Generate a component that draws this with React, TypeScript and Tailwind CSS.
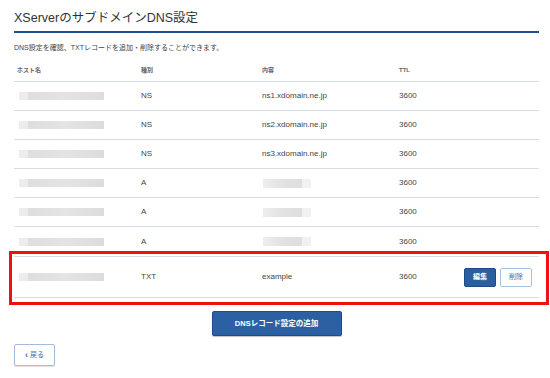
import React from "react";

type Rec = { type: string; content?: string; ttl: string; blurContent?: boolean };

const records: Rec[] = [
  { type: "NS", content: "ns1.xdomain.ne.jp", ttl: "3600" },
  { type: "NS", content: "ns2.xdomain.ne.jp", ttl: "3600" },
  { type: "NS", content: "ns3.xdomain.ne.jp", ttl: "3600" },
  { type: "A", blurContent: true, ttl: "3600" },
  { type: "A", blurContent: true, ttl: "3600" },
  { type: "A", blurContent: true, ttl: "3600" },
];

const font = { fontFamily: '"Liberation Sans", "Noto Sans CJK JP", sans-serif' };

// masked host name (blurred in the original)
const BlurHost = () => (
  <div className="ml-[2px] flex h-[8px] w-[85px]">
    <div className="w-[9px] bg-[#ececec]" />
    <div className="flex-1 bg-gradient-to-r from-[#dedede] via-[#e4e4e4] to-[#dcdcdc]" />
  </div>
);

const BlurContent = () => (
  <div className="ml-[1px] flex h-[9px] w-[48px]">
    <div className="w-[39px] bg-gradient-to-r from-[#ededed] via-[#e2e2e2] to-[#dedede]" />
    <div className="flex-1 bg-[#f1f1f1]" />
  </div>
);

export default function App() {
  return (
    <div className="h-[378px] w-[550px] bg-white text-[#444]" style={font}>
      <div className="pl-[14px] pr-[11px] pt-[10px]">
        <h1 className="border-b-2 border-[#1f4f93] pb-[4px] text-[12.5px] font-normal leading-[17px] text-[#333]">
          XServerのサブドメインDNS設定
        </h1>
        <p className="mt-[10px] text-[7px] leading-[10px] text-[#444]">
          DNS設定を確認、TXTレコードを追加・削除することができます。
        </p>

        <div className="mt-[7px] grid h-[22px] grid-cols-[124px_121px_137px_1fr] items-center border-b border-[#d4dee9] text-[6px] font-bold text-[#666]">
          <div className="pl-[3px]">ホスト名</div>
          <div className="pl-[3px]">種別</div>
          <div className="pl-[3px]">内容</div>
          <div className="pl-[3px]">TTL</div>
        </div>

        {records.map((r, i) => (
          <div
            key={i}
            className={
              "grid h-[29px] grid-cols-[124px_121px_137px_1fr] items-center text-[8px] text-[#444] " +
              (i < records.length - 1 ? "border-b border-[#d4dee9]" : "")
            }
          >
            <div className="pl-[3px]">
              <BlurHost />
            </div>
            <div className="pl-[3px]">{r.type}</div>
            <div className="pl-[3px]">{r.blurContent ? <BlurContent /> : r.content}</div>
            <div className="pl-[3px]">{r.ttl}</div>
          </div>
        ))}

        <div className="relative">
          <div className="grid h-[42px] grid-cols-[124px_121px_137px_1fr] items-center border-y border-[#d4dee9] text-[8px] text-[#444]">
            <div className="pl-[3px]">
              <BlurHost />
            </div>
            <div className="pl-[3px]">TXT</div>
            <div className="pl-[3px]">example</div>
            <div className="flex items-center justify-between pl-[3px] pr-[7px]">
              <span>3600</span>
              <div className="flex gap-[4px]">
                <button className="flex h-[19px] w-[32px] items-center justify-center rounded-[2px] border border-[#1b4a85] bg-[#2a5f9e] text-[7px] font-bold text-white">
                  編集
                </button>
                <button className="flex h-[19px] w-[32px] items-center justify-center rounded-[2px] border border-[#a9c1de] bg-white text-[7px] text-[#3d6cab]">
                  削除
                </button>
              </div>
            </div>
          </div>
          <div className="pointer-events-none absolute -bottom-[7px] -left-[5px] -right-[10px] -top-[5px] border-[3px] border-[#ee1111]" />
        </div>

        <div className="mt-[13px] flex justify-center">
          <button className="flex h-[25px] w-[130px] items-center justify-center rounded-[2px] border border-[#1d4c88] bg-[#2b61a2] text-[7.5px] font-bold text-white shadow-[0_1px_1px_rgba(0,0,0,0.25)]">
            DNSレコード設定の追加
          </button>
        </div>

        <button className="mt-[8px] flex h-[22px] w-[41px] items-center justify-center gap-[2px] rounded-[2px] border border-[#a2bcdc] bg-white text-[7px] text-[#3d6cab] shadow-[0_1px_1px_rgba(0,0,0,0.12)]">
          <span className="text-[9px] font-bold leading-none">‹</span>
          <span>戻る</span>
        </button>
      </div>
    </div>
  );
}
